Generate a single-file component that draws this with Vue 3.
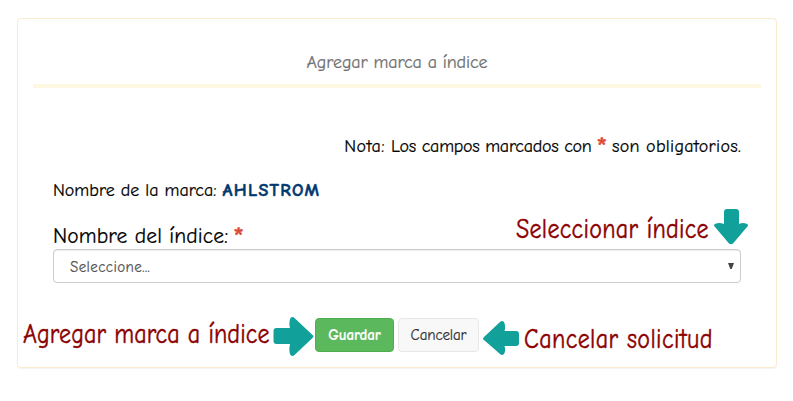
<script setup>
import { ref } from 'vue'

const selected = ref('')
</script>

<template>
  <main class="page">
    <section class="panel">
      <header class="panel-header"><h1 class="title">Agregar marca a índice</h1></header>
      <form class="form" @submit.prevent>
        <p class="note"><span class="note-start">Nota: </span><span>Los campos marcados con</span><b class="required">*</b><span class="note-end">son obligatorios.</span></p>
        <p class="brand"><span class="brand-label">Nombre de la marca:</span><strong class="brand-name">AHLSTROM</strong></p>
        <label class="field-label" for="indice"><span class="field-text">Nombre del índice:</span><b class="required">*</b></label>
        <div class="select-box">
          <select id="indice" v-model="selected" class="select">
            <option value="">Seleccione...</option>
          </select>
          <svg class="caret" viewBox="0 0 6 6"><path d="M0 0H6L3.7 6H2.3Z" /></svg>
        </div>
        <div class="actions">
          <button class="btn save" type="submit"><span>Guardar</span></button>
          <button class="btn cancel" type="button"><span>Cancelar</span></button>
        </div>
      </form>
    </section>

    <div class="callout callout-select">
      <span class="tip select-tip">Seleccionar índice</span>
      <svg class="arrow-down" viewBox="0 0 34 36"><path d="M10 3Q10 0 13 0H22Q25 0 25 3V15Q29 13 33 15Q35 16 33 18L19 34.500Q17 36 15 34.500L1 18Q-1 16 1 15Q5 13 10 15Z" /></svg>
    </div>
    <div class="callout callout-save">
      <span class="tip save-tip">Agregar marca a índice</span>
      <svg class="arrow-right" viewBox="0 0 40 39"><path d="M0 14Q0 11 3 11H16.500Q15 5 17 1Q19-1 21 1L39 18Q41 19 39 21L21 38Q19 40 17 38Q15 34 16.500 27H3Q0 27 0 24Z" /></svg>
    </div>
    <div class="callout callout-cancel">
      <svg class="arrow-left" viewBox="0 0 36 34"><path d="M36 13Q36 10 33 10H21.500Q23 5 21 1Q19-1 17 1L1 16Q-1 18 1 19L17 33Q19 35 21 33Q23 30 21.500 25H33Q36 25 36 22Z" /></svg>
      <span class="tip cancel-tip">Cancelar solicitud</span>
    </div>
  </main>
</template>

<style>
body { margin: 0; background: #fff; }
</style>

<style scoped>
* { box-sizing: border-box; }
.page {
  position: relative;
  width: 793px;
  height: 401px;
  padding: 18px 16px 0 17px;
  overflow: hidden;
  font-family: "Comic Sans MS", "Comic Neue", "Open Sans", sans-serif;
  color: #000;
  -webkit-text-stroke: .2px;
}
.panel {
  height: 350px;
  padding: 0 15px;
  border: 1px solid #faebcc;
  border-radius: 4px;
  box-shadow: 0 1px 1px rgba(0, 0, 0, .05);
}
.panel-header {
  height: 69px;
  padding-top: 32px;
  border-bottom: 4px solid #fef7e1;
  text-align: center;
}
.title { margin: 0; font-size: 18px; line-height: 24px; font-weight: 400; color: #707070; letter-spacing: -.1px; }
.form { padding: 46px 20px 0; }
.note, .brand { margin: 0; height: 24px; font-size: 18px; line-height: 25px; white-space: nowrap; }
.note { display: flex; justify-content: flex-end; letter-spacing: -.25px; }
.note-start { margin-right: 6px; letter-spacing: .5px; }
.note .required { margin: 0 5px; }
.note-end { letter-spacing: .3px; }
.required { padding-top: 1px; font-size: 28px; color: #dd4b39; }
.brand { display: flex; gap: 6px; margin-top: 20px; }
.brand-name { color: #003870; letter-spacing: 1.3px; -webkit-text-stroke: .5px; }
.field-label { display: flex; gap: 5px; margin-top: 19px; height: 28px; font-size: 21.5px; line-height: 30px; letter-spacing: .12px; }
.select-box { position: relative; height: 34px; }
.select {
  width: 100%;
  height: 34px;
  padding: 1px 16px 0;
  border: 1px solid #ccc;
  border-radius: 4px;
  appearance: none;
  background: #fff;
  box-shadow: inset 0 1px 1px rgba(0, 0, 0, .075);
  font: 15px "Comic Sans MS", "Comic Neue", "Open Sans", sans-serif;
  letter-spacing: .4px;
  color: #555;
}
.caret { position: absolute; top: 14px; right: 7px; width: 6px; height: 6px; fill: #444; }
.actions { display: flex; gap: 4px; margin: 35px 0 0 262px; }
.btn {
  height: 34px;
  padding: 0;
  border: 1px solid #e7e7e7;
  border-radius: 4px;
  font: 15px "Comic Sans MS", "Comic Neue", "Open Sans", sans-serif;
}
.save { width: 79px; border-color: #4cae4c; background: #5cb85c; color: #fff; font-weight: 700; letter-spacing: -.1px; }
.cancel { width: 81px; background: #f8f8f8; color: #333; letter-spacing: -.15px; }
.callout { position: absolute; display: flex; color: #8b0000; fill: #12a19a; font-size: 24px; line-height: 32px; white-space: nowrap; }
.callout-select { left: 516px; top: 209px; }
.callout-save { left: 23px; top: 317px; }
.callout-cancel { left: 483px; top: 321px; }
.tip { height: 32px; transform: scaleY(1.14); -webkit-text-stroke: .4px; }
.select-tip { width: 198px; margin-top: 4px; letter-spacing: .3px; }
.save-tip { width: 250px; margin-top: 1px; letter-spacing: .1px; }
.cancel-tip { margin: 2px 0 0 5px; letter-spacing: .42px; }
.arrow-down { width: 34px; height: 36px; }
.arrow-right { width: 41px; height: 39px; }
.arrow-left { width: 36px; height: 34px; }
</style>
